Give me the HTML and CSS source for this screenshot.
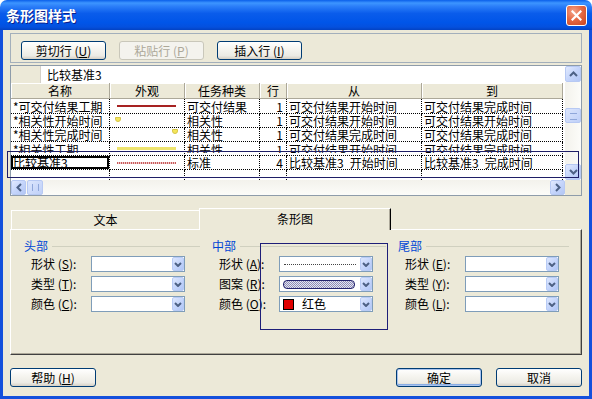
FILE: index.html
```html
<!DOCTYPE html>
<html lang="zh-CN">

<head>
    <meta charset="UTF-8">
    <title>条形图样式</title>
    <link rel="stylesheet" href="styles.css">
</head>

<body>
    <div class="window">
        <div class="titlebar">
            <span class="title">条形图样式</span>
            <button class="close-btn">
                <svg width="11" height="11" viewBox="0 0 11 11"><path d="M1.5 1.5 L9.5 9.5 M9.5 1.5 L1.5 9.5" stroke="#fff" stroke-width="2.2" stroke-linecap="square"/></svg>
            </button>
        </div>

        <div class="client">
            <div class="toolbar">
                <button class="btn">剪切行 (<u>U</u>)</button>
                <button class="btn" disabled>粘贴行 (<u>P</u>)</button>
                <button class="btn">插入行 (<u>I</u>)</button>
            </div>

            <div class="grid-box">
                <div class="grid-main">
                    <div class="edit-row">
                        <div class="edit-gutter"></div>
                        <div class="edit-field">比较基准3</div>
                    </div>
                    <table class="grid">
                        <colgroup>
                            <col style="width:99px">
                            <col style="width:75px">
                            <col style="width:75px">
                            <col style="width:27px">
                            <col style="width:135px">
                            <col style="width:141px">
                        </colgroup>
                        <thead>
                            <tr>
                                <th>名称</th>
                                <th>外观</th>
                                <th>任务种类</th>
                                <th>行</th>
                                <th>从</th>
                                <th>到</th>
                            </tr>
                        </thead>
                        <tbody>
                            <tr class="r1">
                                <td>*可交付结果工期</td>
                                <td><div class="bar bar-red"></div></td>
                                <td>可交付结果</td>
                                <td class="num">1</td>
                                <td>可交付结果开始时间</td>
                                <td>可交付结果完成时间</td>
                            </tr>
                            <tr class="r2">
                                <td>*相关性开始时间</td>
                                <td class="top"><div class="marker marker-start"></div></td>
                                <td>相关性</td>
                                <td class="num">1</td>
                                <td>可交付结果开始时间</td>
                                <td>可交付结果开始时间</td>
                            </tr>
                            <tr class="r3">
                                <td>*相关性完成时间</td>
                                <td class="top"><div class="marker marker-end"></div></td>
                                <td>相关性</td>
                                <td class="num">1</td>
                                <td>可交付结果完成时间</td>
                                <td>可交付结果完成时间</td>
                            </tr>
                            <tr class="r4">
                                <td class="top"><div class="clip">*相关性工期</div></td>
                                <td><div class="bar bar-yellow"></div></td>
                                <td class="top"><div class="clip">相关性</div></td>
                                <td class="num top"><div class="clip">1</div></td>
                                <td class="top"><div class="clip">可交付结果开始时间</div></td>
                                <td class="top"><div class="clip">可交付结果完成时间</div></td>
                            </tr>
                            <tr class="r5">
                                <td class="focus">比较基准3</td>
                                <td><div class="bar bar-base"></div></td>
                                <td>标准</td>
                                <td class="num">4</td>
                                <td>比较基准3&ensp;开始时间</td>
                                <td>比较基准3&ensp;完成时间</td>
                            </tr>
                            <tr class="empty">
                                <td></td>
                                <td></td>
                                <td></td>
                                <td></td>
                                <td></td>
                                <td></td>
                            </tr>
                        </tbody>
                    </table>
                </div>

                <div class="vscroll">
                    <div class="sb-btn">
                        <svg width="9" height="6" viewBox="0 0 9 6"><polyline points="1,5 4.5,1.5 8,5" fill="none" stroke="#4D6185" stroke-width="2"/></svg>
                    </div>
                    <div class="sb-track">
                        <div class="sb-thumb v-thumb"></div>
                    </div>
                    <div class="sb-btn">
                        <svg width="9" height="6" viewBox="0 0 9 6"><polyline points="1,1 4.5,4.5 8,1" fill="none" stroke="#4D6185" stroke-width="2"/></svg>
                    </div>
                </div>

                <div class="hscroll">
                    <div class="sb-btn">
                        <svg width="6" height="9" viewBox="0 0 6 9"><polyline points="5,1 1.5,4.5 5,8" fill="none" stroke="#4D6185" stroke-width="2"/></svg>
                    </div>
                    <div class="sb-track h-track">
                        <div class="sb-thumb h-thumb"></div>
                    </div>
                    <div class="sb-btn">
                        <svg width="6" height="9" viewBox="0 0 6 9"><polyline points="1,1 4.5,4.5 1,8" fill="none" stroke="#4D6185" stroke-width="2"/></svg>
                    </div>
                </div>
                <div class="corner"></div>

                <div class="selection"></div>
            </div>

            <div class="tabs">
                <div class="tab">文本</div>
                <div class="tab active">条形图</div>
            </div>

            <div class="panel">
                <div class="group">
                    <div class="group-head"><span>头部</span></div>
                    <div class="field">
                        <label>形状 (<u>S</u>):</label>
                        <div class="combo"><div class="combo-val"></div><div class="combo-btn"><svg width="8" height="5" viewBox="0 0 8 5"><polyline points="1,1 4,4 7,1" fill="none" stroke="#4D6185" stroke-width="2"/></svg></div></div>
                    </div>
                    <div class="field">
                        <label>类型 (<u>T</u>):</label>
                        <div class="combo"><div class="combo-val"></div><div class="combo-btn"><svg width="8" height="5" viewBox="0 0 8 5"><polyline points="1,1 4,4 7,1" fill="none" stroke="#4D6185" stroke-width="2"/></svg></div></div>
                    </div>
                    <div class="field">
                        <label>颜色 (<u>C</u>):</label>
                        <div class="combo"><div class="combo-val"></div><div class="combo-btn"><svg width="8" height="5" viewBox="0 0 8 5"><polyline points="1,1 4,4 7,1" fill="none" stroke="#4D6185" stroke-width="2"/></svg></div></div>
                    </div>
                </div>

                <div class="group">
                    <div class="group-head"><span>中部</span></div>
                    <div class="field">
                        <label>形状 (<u>A</u>):</label>
                        <div class="combo"><div class="combo-val"><div class="shape-line"></div></div><div class="combo-btn"><svg width="8" height="5" viewBox="0 0 8 5"><polyline points="1,1 4,4 7,1" fill="none" stroke="#4D6185" stroke-width="2"/></svg></div></div>
                    </div>
                    <div class="field">
                        <label>图案 (<u>R</u>):</label>
                        <div class="combo"><div class="combo-val"><div class="pattern-pill"></div></div><div class="combo-btn"><svg width="8" height="5" viewBox="0 0 8 5"><polyline points="1,1 4,4 7,1" fill="none" stroke="#4D6185" stroke-width="2"/></svg></div></div>
                    </div>
                    <div class="field">
                        <label>颜色 (<u>O</u>):</label>
                        <div class="combo"><div class="combo-val"><span class="swatch"></span>红色</div><div class="combo-btn"><svg width="8" height="5" viewBox="0 0 8 5"><polyline points="1,1 4,4 7,1" fill="none" stroke="#4D6185" stroke-width="2"/></svg></div></div>
                    </div>
                </div>

                <div class="group">
                    <div class="group-head"><span>尾部</span></div>
                    <div class="field">
                        <label>形状 (<u>E</u>):</label>
                        <div class="combo"><div class="combo-val"></div><div class="combo-btn"><svg width="8" height="5" viewBox="0 0 8 5"><polyline points="1,1 4,4 7,1" fill="none" stroke="#4D6185" stroke-width="2"/></svg></div></div>
                    </div>
                    <div class="field">
                        <label>类型 (<u>Y</u>):</label>
                        <div class="combo"><div class="combo-val"></div><div class="combo-btn"><svg width="8" height="5" viewBox="0 0 8 5"><polyline points="1,1 4,4 7,1" fill="none" stroke="#4D6185" stroke-width="2"/></svg></div></div>
                    </div>
                    <div class="field">
                        <label>颜色 (<u>L</u>):</label>
                        <div class="combo"><div class="combo-val"></div><div class="combo-btn"><svg width="8" height="5" viewBox="0 0 8 5"><polyline points="1,1 4,4 7,1" fill="none" stroke="#4D6185" stroke-width="2"/></svg></div></div>
                    </div>
                </div>

                <div class="middle-mark"></div>
            </div>

            <div class="footer">
                <button class="btn">帮助 (<u>H</u>)</button>
                <button class="btn default push">确定</button>
                <button class="btn">取消</button>
            </div>
        </div>
    </div>
</body>

</html>
```

FILE: styles.css
```css
body {
    margin: 0;
    background: #fff;
    font-family: "Noto Sans CJK SC", "Liberation Sans", sans-serif;
    font-size: 12px;
    color: #000;
}

.window {
    width: 592px;
    height: 399px;
    display: flex;
    flex-direction: column;
}

/* title bar */
.titlebar {
    height: 30px;
    box-sizing: border-box;
    padding: 0 5px 0 6px;
    display: flex;
    align-items: center;
    justify-content: space-between;
    border-radius: 7px 7px 0 0;
    background: linear-gradient(to bottom, #0A5FEA 0%, #3D95FF 10%, #2A7DF8 22%, #0A5CEB 45%, #0055E8 75%, #0450DE 90%, #0342C2 100%);
}

.title {
    color: #fff;
    font-weight: bold;
    font-size: 14px;
    line-height: 16px;
    text-shadow: 1px 1px 0 #0A1E8C;
}

.close-btn {
    width: 21px;
    height: 21px;
    padding: 0;
    border: 1px solid #fff;
    border-radius: 3px;
    background: radial-gradient(circle at 35% 30%, #F3A48B 0%, #E66A45 45%, #C9441F 100%);
    display: flex;
    align-items: center;
    justify-content: center;
}

.client {
    flex: 1;
    background: #ECE9D8;
    border: 3px solid #1450DC;
    border-top: 0;
    padding: 3px 7px 0 7px;
}

/* buttons */
.btn {
    width: 85px;
    height: 19px;
    padding: 0;
    font-family: inherit;
    font-size: 12px;
    line-height: 14px;
    color: #000;
    border: 1px solid #003C74;
    border-radius: 3px;
    background: linear-gradient(to bottom, #FFFFFF 0%, #F6F5F0 40%, #ECEBE5 80%, #D6D0C5 100%);
}

.btn u {
    text-decoration: underline;
}

.btn:disabled {
    color: #ACA899;
    border-color: #C9C7BA;
    background: #F4F3EE;
}

.btn.default {
    box-shadow: inset 0 0 0 1px #A9C3EE, inset 0 -1px 0 1px #89ADE4;
}

.toolbar {
    height: 30px;
    box-sizing: border-box;
    border: 1px solid #A3AFBB;
    padding: 7px 10px 0;
    display: flex;
    gap: 13px;
}

/* grid */
.grid-box {
    position: relative;
    margin-top: 2px;
    border: 1px solid #8E9CAA;
    display: grid;
    grid-template-columns: 1fr 16px;
    grid-template-rows: 114px 15px;
    background: #fff;
}

.grid-main {
    overflow: hidden;
}

.edit-row {
    height: 17px;
    display: flex;
}

.edit-gutter {
    width: 29px;
    background: #ECE9D8;
    border-right: 1px solid #D4D0C8;
}

.edit-field {
    flex: 1;
    padding-left: 6px;
    line-height: 17px;
}

.grid {
    table-layout: fixed;
    width: 552px;
    border-collapse: separate;
    border-spacing: 0;
    line-height: 13px;
}

.grid th {
    height: 15px;
    padding: 0;
    font-weight: normal;
    background: #ECE9D8;
    border-right: 1px solid #ACA899;
    border-bottom: 1px solid #ACA899;
    box-shadow: inset 1px 1px 0 #fff;
}

.grid td {
    padding: 0 0 0 2px;
    white-space: nowrap;
    overflow: hidden;
    border-right: 1px dotted #000;
    border-bottom: 1px dotted #000;
    vertical-align: middle;
}

.grid td.num {
    text-align: right;
    padding: 0 3px 0 0;
}

.grid td.top {
    vertical-align: top;
}

.grid .r1 { height: 15px; }
.grid .r2 { height: 14px; }
.grid .r3 { height: 13px; }
.grid .r4 { height: 14px; }
.grid .r5 { height: 14px; }

.grid .empty {
    height: 12px;
}

.grid .empty td {
    border-bottom: 0;
}

.grid td.focus {
    box-shadow: inset 0 0 0 2px #000;
    padding-left: 2px;
}

.clip {
    height: 10px;
    overflow: hidden;
    padding-top: 1px;
}

.bar {
    width: 59px;
    margin-left: 5px;
}

.bar-red {
    height: 2px;
    background: #A72222;
}

.bar-yellow {
    height: 3px;
    background: #EDE36C;
}

.bar-base {
    height: 2px;
    background: repeating-linear-gradient(90deg, #C65A5A 0 1px, #F2C8C8 1px 2px);
}

.marker {
    width: 6px;
    height: 5px;
    background: #F4E65A;
    border: 1px solid #D7C64A;
    border-radius: 0 0 3px 3px;
    box-sizing: border-box;
}

.marker-start {
    margin: 3px 0 0 3px;
}

.marker-end {
    margin: 1px 0 0 60px;
}

/* scrollbars */
.vscroll {
    display: flex;
    flex-direction: column;
}

.hscroll {
    display: flex;
}

.sb-btn {
    width: 16px;
    height: 16px;
    flex: none;
    box-sizing: border-box;
    border: 1px solid #B7C9F3;
    border-radius: 2px;
    background: linear-gradient(135deg, #E2EAFE 0%, #C5D5FB 50%, #B3C7F5 100%);
    display: flex;
    align-items: center;
    justify-content: center;
}

.hscroll .sb-btn {
    width: 15px;
    height: 15px;
}

.sb-track {
    flex: 1;
    background: linear-gradient(to right, #F3F2EC, #FCFCF9);
    padding-top: 26px;
}

.h-track {
    padding: 0 0 0 1px;
    background: linear-gradient(to bottom, #F3F2EC, #FCFCF9);
}

.sb-thumb {
    box-sizing: border-box;
    border: 1px solid #B7C9F3;
    border-radius: 2px;
    background: linear-gradient(135deg, #DCE6FD, #BFD0F8);
}

.v-thumb {
    width: 16px;
    height: 15px;
    background: repeating-linear-gradient(to bottom, transparent 0 4px, #8FA7DA 4px 5px, transparent 5px 6px) center / 7px 100% no-repeat, linear-gradient(135deg, #DCE6FD, #BFD0F8);
}

.h-thumb {
    width: 16px;
    height: 15px;
    background: repeating-linear-gradient(to right, transparent 0 4px, #8FA7DA 4px 5px, transparent 5px 6px) center / 100% 7px no-repeat, linear-gradient(135deg, #DCE6FD, #BFD0F8);
}

.corner {
    background: #ECE9D8;
}

.selection {
    position: absolute;
    left: -4px;
    top: 85px;
    width: 572px;
    height: 27px;
    box-sizing: border-box;
    border: 1px solid #1E1E66;
}

/* tabs */
.tabs {
    margin-top: 12px;
    padding-left: 1px;
    height: 21px;
    display: flex;
    align-items: flex-end;
    position: relative;
    z-index: 1;
}

.tab {
    width: 188px;
    height: 19px;
    box-sizing: border-box;
    text-align: center;
    line-height: 18px;
    border-top: 1px solid #fff;
    border-left: 1px solid #fff;
    background: #ECE9D8;
}

.tab.active {
    width: 192px;
    height: 22px;
    margin-bottom: -1px;
    border-right: 1px solid #000;
    box-shadow: inset -1px 0 0 #ACA899;
    line-height: 20px;
}

.panel {
    position: relative;
    height: 126px;
    box-sizing: border-box;
    border: 1px solid;
    border-color: #fff #404040 #404040 #fff;
    box-shadow: inset -1px -1px 0 #ACA899;
    padding: 10px 0 0 13px;
    display: grid;
    grid-template-columns: 188px 186px 1fr;
}

.group-head {
    height: 12px;
    display: flex;
    align-items: center;
    margin-right: 12px;
    margin-bottom: 3px;
}

.group-head span {
    color: #0046D5;
    line-height: 12px;
}

.group-head::after {
    content: "";
    flex: 1;
    border-top: 1px solid #D0D0BF;
    margin-left: 4px;
}

.field {
    height: 16px;
    margin-top: 4px;
    display: flex;
    align-items: center;
}

.field label {
    width: 67px;
    box-sizing: border-box;
    padding-left: 7px;
    line-height: 14px;
    white-space: nowrap;
}

.combo {
    width: 94px;
    height: 16px;
    box-sizing: border-box;
    border: 1px solid #7F9DB9;
    background: #fff;
    display: flex;
    align-items: center;
}

.combo-val {
    flex: 1;
    display: flex;
    align-items: center;
    padding-left: 3px;
    line-height: 14px;
}

.combo-btn {
    width: 12px;
    height: 14px;
    box-sizing: border-box;
    border: 1px solid #B8CBF5;
    border-radius: 2px;
    background: linear-gradient(135deg, #DDE7FE 0%, #C3D4FB 55%, #B0C6F6 100%);
    display: flex;
    align-items: center;
    justify-content: center;
}

.shape-line {
    width: 72px;
    margin-left: 1px;
    border-top: 1px dotted #444;
}

.pattern-pill {
    width: 72px;
    height: 9px;
    box-sizing: border-box;
    border: 1px solid #23236E;
    border-radius: 4px;
    background: repeating-conic-gradient(#8D8DB6 0 25%, #E4E4F2 0 50%) 0 0 / 2px 2px;
}

.swatch {
    width: 11px;
    height: 11px;
    box-sizing: border-box;
    border: 1px solid #000;
    background: #E00000;
    margin-right: 8px;
}

.middle-mark {
    position: absolute;
    left: 249px;
    top: 13px;
    width: 128px;
    height: 87px;
    box-sizing: border-box;
    border: 1px solid #1E1E78;
}

.footer {
    margin-top: 13px;
    display: flex;
    gap: 14px;
}

.footer .btn {
    width: 86px;
}

.footer .push {
    margin-left: auto;
}
```
